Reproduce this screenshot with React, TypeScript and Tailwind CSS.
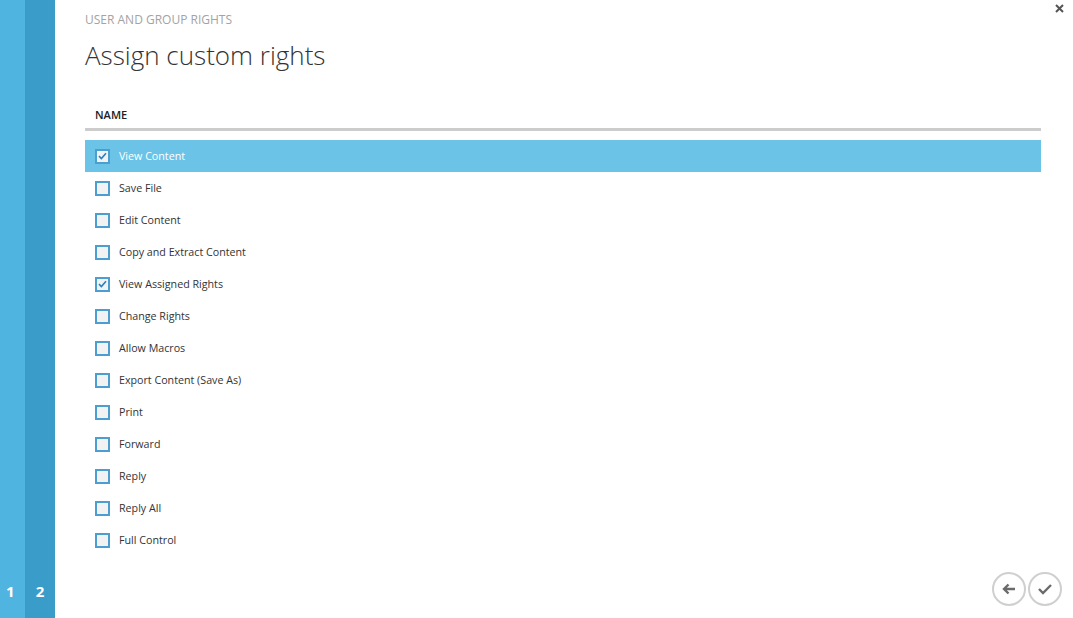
import { useState } from 'react';

const RIGHTS = [
  { name: 'View Content', checked: true },
  { name: 'Save File', checked: false },
  { name: 'Edit Content', checked: false },
  { name: 'Copy and Extract Content', checked: false },
  { name: 'View Assigned Rights', checked: true },
  { name: 'Change Rights', checked: false },
  { name: 'Allow Macros', checked: false },
  { name: 'Export Content (Save As)', checked: false },
  { name: 'Print', checked: false },
  { name: 'Forward', checked: false },
  { name: 'Reply', checked: false },
  { name: 'Reply All', checked: false },
  { name: 'Full Control', checked: false },
];

const Check = ({ checked }: { checked: boolean }) => (
  <span className="flex h-[15px] w-[15px] shrink-0 items-center justify-center border-2 border-[#4a9fd0] bg-[#f2f2f2]">
    {checked && (
      <svg width="9" height="8" viewBox="0 0 9 8" fill="none">
        <path d="M1 4.2 L3.4 6.5 L8 1.3" stroke="#2a7fc0" strokeWidth="1.6" />
      </svg>
    )}
  </span>
);

export default function App() {
  const [rights, setRights] = useState(RIGHTS);
  const selected = 0;

  return (
    <div
      className="flex h-[618px] w-[1073px] overflow-hidden bg-white"
      style={{ fontFamily: '"Open Sans", "Noto Sans", sans-serif' }}
    >
      {/* step rail */}
      <div className="flex w-[25px] flex-col justify-end bg-[#4fb4e0] pb-[19px] pl-[6px]">
        <span className="text-[15px] font-bold leading-none text-white">1</span>
      </div>
      <div className="flex w-[30px] flex-col justify-end bg-[#3a9cc9] pb-[19px]">
        <span className="text-center text-[15px] font-bold leading-none text-white">2</span>
      </div>

      <div className="relative flex flex-1 flex-col pl-[30px] pr-[32px]">
        <button className="absolute right-[9px] top-[4px]">
          <svg width="9" height="9" viewBox="0 0 9 9" fill="none">
            <path d="M1 1 L8 8 M8 1 L1 8" stroke="#555" strokeWidth="2" />
          </svg>
        </button>

        <div className="pt-[13px] text-[12px] uppercase leading-[14px] text-[#a3a3a3]">
          User and Group Rights
        </div>
        <h1 className="mt-[12px] text-[26px] font-light leading-[32px] text-[#333]">
          Assign custom rights
        </h1>

        <div className="mt-[37px] px-[10px] text-[11px] font-semibold uppercase leading-[14px] text-[#222]">
          Name
        </div>
        <div className="mt-[6px] h-[3px] bg-[#cccccc]" />

        <div className="mt-[9px] flex flex-col">
          {rights.map((r, i) => (
            <label
              key={r.name}
              className={`flex h-[32px] cursor-pointer items-center gap-[9px] pl-[10px] text-[10.7px] ${
                i === selected ? 'bg-[#6bc3e8] text-white' : 'text-[#333]'
              }`}
            >
              <input
                type="checkbox"
                className="hidden"
                checked={r.checked}
                onChange={() =>
                  setRights((prev) =>
                    prev.map((p, j) => (j === i ? { ...p, checked: !p.checked } : p)),
                  )
                }
              />
              <Check checked={r.checked} />
              <span>{r.name}</span>
            </label>
          ))}
        </div>

        <div className="absolute bottom-[12px] right-[11px] flex gap-[2px]">
          <button className="flex h-[34px] w-[34px] items-center justify-center rounded-full border-2 border-[#cfcfcf]">
            <svg width="16" height="14" viewBox="0 0 16 14" fill="none">
              <path d="M14 7 H3 M7.5 2.5 L3 7 L7.5 11.5" stroke="#6b6b6b" strokeWidth="2.4" />
            </svg>
          </button>
          <button className="flex h-[34px] w-[34px] items-center justify-center rounded-full border-2 border-[#cfcfcf]">
            <svg width="16" height="14" viewBox="0 0 16 14" fill="none">
              <path d="M2 7 L6 11 L14 3" stroke="#6b6b6b" strokeWidth="2.4" />
            </svg>
          </button>
        </div>
      </div>
    </div>
  );
}
